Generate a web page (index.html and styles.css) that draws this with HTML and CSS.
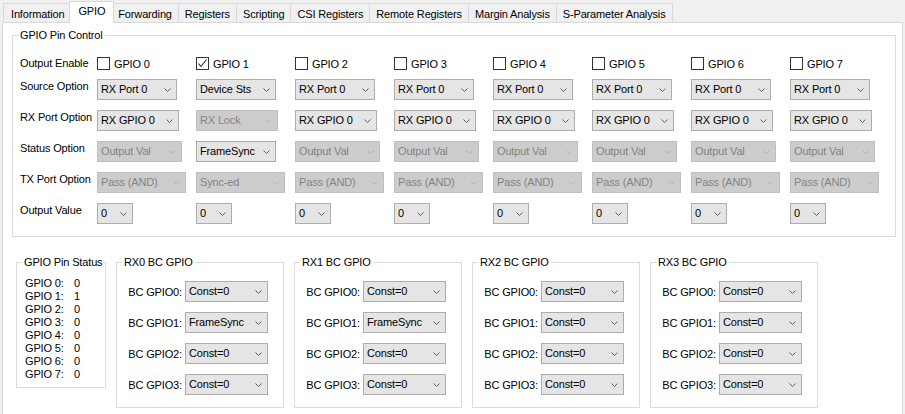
FILE: index.html
```html
<!DOCTYPE html>
<html>
<head>
<meta charset="utf-8">
<link rel="stylesheet" href="styles.css">
</head>
<body>
<div class="tabbar">
  <div class="tab">Information</div>
  <div class="tab active">GPIO</div>
  <div class="tab">Forwarding</div>
  <div class="tab">Registers</div>
  <div class="tab">Scripting</div>
  <div class="tab">CSI Registers</div>
  <div class="tab">Remote Registers</div>
  <div class="tab">Margin Analysis</div>
  <div class="tab">S-Parameter Analysis</div>
</div>
<div class="pane">
  <div class="group pin-control">
    <div class="group-title">GPIO Pin Control</div>
    <div class="pc-grid">
      <div class="lbl mid">Output Enable</div>
      <label class="cb"><span class="box"></span>GPIO 0</label>
      <label class="cb"><span class="box checked"><svg viewBox="0 0 11 11" width="11" height="11"><polyline points="1.5,5.5 4,8.5 9.5,1.5" fill="none" stroke="#222" stroke-width="1.1"/></svg></span>GPIO 1</label>
      <label class="cb"><span class="box"></span>GPIO 2</label>
      <label class="cb"><span class="box"></span>GPIO 3</label>
      <label class="cb"><span class="box"></span>GPIO 4</label>
      <label class="cb"><span class="box"></span>GPIO 5</label>
      <label class="cb"><span class="box"></span>GPIO 6</label>
      <label class="cb"><span class="box"></span>GPIO 7</label>

      <div class="lbl">Source Option</div>
      <div class="combo w-src"><span>RX Port 0</span><svg class="chev" viewBox="0 0 7 4"><polyline points="0.5,0.5 3.5,3.5 6.5,0.5"/></svg></div>
      <div class="combo w-src"><span>Device Sts</span><svg class="chev" viewBox="0 0 7 4"><polyline points="0.5,0.5 3.5,3.5 6.5,0.5"/></svg></div>
      <div class="combo w-src"><span>RX Port 0</span><svg class="chev" viewBox="0 0 7 4"><polyline points="0.5,0.5 3.5,3.5 6.5,0.5"/></svg></div>
      <div class="combo w-src"><span>RX Port 0</span><svg class="chev" viewBox="0 0 7 4"><polyline points="0.5,0.5 3.5,3.5 6.5,0.5"/></svg></div>
      <div class="combo w-src"><span>RX Port 0</span><svg class="chev" viewBox="0 0 7 4"><polyline points="0.5,0.5 3.5,3.5 6.5,0.5"/></svg></div>
      <div class="combo w-src"><span>RX Port 0</span><svg class="chev" viewBox="0 0 7 4"><polyline points="0.5,0.5 3.5,3.5 6.5,0.5"/></svg></div>
      <div class="combo w-src"><span>RX Port 0</span><svg class="chev" viewBox="0 0 7 4"><polyline points="0.5,0.5 3.5,3.5 6.5,0.5"/></svg></div>
      <div class="combo w-src"><span>RX Port 0</span><svg class="chev" viewBox="0 0 7 4"><polyline points="0.5,0.5 3.5,3.5 6.5,0.5"/></svg></div>

      <div class="lbl">RX Port Option</div>
      <div class="combo w-rxp"><span>RX GPIO 0</span><svg class="chev" viewBox="0 0 7 4"><polyline points="0.5,0.5 3.5,3.5 6.5,0.5"/></svg></div>
      <div class="combo w-rxp dis"><span>RX Lock</span><svg class="chev" viewBox="0 0 7 4"><polyline points="0.5,0.5 3.5,3.5 6.5,0.5"/></svg></div>
      <div class="combo w-rxp"><span>RX GPIO 0</span><svg class="chev" viewBox="0 0 7 4"><polyline points="0.5,0.5 3.5,3.5 6.5,0.5"/></svg></div>
      <div class="combo w-rxp"><span>RX GPIO 0</span><svg class="chev" viewBox="0 0 7 4"><polyline points="0.5,0.5 3.5,3.5 6.5,0.5"/></svg></div>
      <div class="combo w-rxp"><span>RX GPIO 0</span><svg class="chev" viewBox="0 0 7 4"><polyline points="0.5,0.5 3.5,3.5 6.5,0.5"/></svg></div>
      <div class="combo w-rxp"><span>RX GPIO 0</span><svg class="chev" viewBox="0 0 7 4"><polyline points="0.5,0.5 3.5,3.5 6.5,0.5"/></svg></div>
      <div class="combo w-rxp"><span>RX GPIO 0</span><svg class="chev" viewBox="0 0 7 4"><polyline points="0.5,0.5 3.5,3.5 6.5,0.5"/></svg></div>
      <div class="combo w-rxp"><span>RX GPIO 0</span><svg class="chev" viewBox="0 0 7 4"><polyline points="0.5,0.5 3.5,3.5 6.5,0.5"/></svg></div>

      <div class="lbl">Status Option</div>
      <div class="combo w-st dis"><span>Output Val</span><svg class="chev" viewBox="0 0 7 4"><polyline points="0.5,0.5 3.5,3.5 6.5,0.5"/></svg></div>
      <div class="combo w-fs"><span>FrameSync</span><svg class="chev" viewBox="0 0 7 4"><polyline points="0.5,0.5 3.5,3.5 6.5,0.5"/></svg></div>
      <div class="combo w-st dis"><span>Output Val</span><svg class="chev" viewBox="0 0 7 4"><polyline points="0.5,0.5 3.5,3.5 6.5,0.5"/></svg></div>
      <div class="combo w-st dis"><span>Output Val</span><svg class="chev" viewBox="0 0 7 4"><polyline points="0.5,0.5 3.5,3.5 6.5,0.5"/></svg></div>
      <div class="combo w-st dis"><span>Output Val</span><svg class="chev" viewBox="0 0 7 4"><polyline points="0.5,0.5 3.5,3.5 6.5,0.5"/></svg></div>
      <div class="combo w-st dis"><span>Output Val</span><svg class="chev" viewBox="0 0 7 4"><polyline points="0.5,0.5 3.5,3.5 6.5,0.5"/></svg></div>
      <div class="combo w-st dis"><span>Output Val</span><svg class="chev" viewBox="0 0 7 4"><polyline points="0.5,0.5 3.5,3.5 6.5,0.5"/></svg></div>
      <div class="combo w-st dis"><span>Output Val</span><svg class="chev" viewBox="0 0 7 4"><polyline points="0.5,0.5 3.5,3.5 6.5,0.5"/></svg></div>

      <div class="lbl">TX Port Option</div>
      <div class="combo w-tx dis"><span>Pass (AND)</span><svg class="chev" viewBox="0 0 7 4"><polyline points="0.5,0.5 3.5,3.5 6.5,0.5"/></svg></div>
      <div class="combo w-tx dis"><span>Sync-ed</span><svg class="chev" viewBox="0 0 7 4"><polyline points="0.5,0.5 3.5,3.5 6.5,0.5"/></svg></div>
      <div class="combo w-tx dis"><span>Pass (AND)</span><svg class="chev" viewBox="0 0 7 4"><polyline points="0.5,0.5 3.5,3.5 6.5,0.5"/></svg></div>
      <div class="combo w-tx dis"><span>Pass (AND)</span><svg class="chev" viewBox="0 0 7 4"><polyline points="0.5,0.5 3.5,3.5 6.5,0.5"/></svg></div>
      <div class="combo w-tx dis"><span>Pass (AND)</span><svg class="chev" viewBox="0 0 7 4"><polyline points="0.5,0.5 3.5,3.5 6.5,0.5"/></svg></div>
      <div class="combo w-tx dis"><span>Pass (AND)</span><svg class="chev" viewBox="0 0 7 4"><polyline points="0.5,0.5 3.5,3.5 6.5,0.5"/></svg></div>
      <div class="combo w-tx dis"><span>Pass (AND)</span><svg class="chev" viewBox="0 0 7 4"><polyline points="0.5,0.5 3.5,3.5 6.5,0.5"/></svg></div>
      <div class="combo w-tx dis"><span>Pass (AND)</span><svg class="chev" viewBox="0 0 7 4"><polyline points="0.5,0.5 3.5,3.5 6.5,0.5"/></svg></div>

      <div class="lbl">Output Value</div>
      <div class="combo w-val"><span>0</span><svg class="chev" viewBox="0 0 7 4"><polyline points="0.5,0.5 3.5,3.5 6.5,0.5"/></svg></div>
      <div class="combo w-val"><span>0</span><svg class="chev" viewBox="0 0 7 4"><polyline points="0.5,0.5 3.5,3.5 6.5,0.5"/></svg></div>
      <div class="combo w-val"><span>0</span><svg class="chev" viewBox="0 0 7 4"><polyline points="0.5,0.5 3.5,3.5 6.5,0.5"/></svg></div>
      <div class="combo w-val"><span>0</span><svg class="chev" viewBox="0 0 7 4"><polyline points="0.5,0.5 3.5,3.5 6.5,0.5"/></svg></div>
      <div class="combo w-val"><span>0</span><svg class="chev" viewBox="0 0 7 4"><polyline points="0.5,0.5 3.5,3.5 6.5,0.5"/></svg></div>
      <div class="combo w-val"><span>0</span><svg class="chev" viewBox="0 0 7 4"><polyline points="0.5,0.5 3.5,3.5 6.5,0.5"/></svg></div>
      <div class="combo w-val"><span>0</span><svg class="chev" viewBox="0 0 7 4"><polyline points="0.5,0.5 3.5,3.5 6.5,0.5"/></svg></div>
      <div class="combo w-val"><span>0</span><svg class="chev" viewBox="0 0 7 4"><polyline points="0.5,0.5 3.5,3.5 6.5,0.5"/></svg></div>
    </div>
  </div>

  <div class="bottom">
    <div class="group pin-status">
      <div class="group-title">GPIO Pin Status</div>
      <div class="ps-grid">
        <span>GPIO 0:</span><span>0</span>
        <span>GPIO 1:</span><span>1</span>
        <span>GPIO 2:</span><span>0</span>
        <span>GPIO 3:</span><span>0</span>
        <span>GPIO 4:</span><span>0</span>
        <span>GPIO 5:</span><span>0</span>
        <span>GPIO 6:</span><span>0</span>
        <span>GPIO 7:</span><span>0</span>
      </div>
    </div>

    <div class="group rx">
      <div class="group-title">RX0 BC GPIO</div>
      <div class="rx-grid">
        <span class="rl">BC GPIO0:</span><div class="combo w-bc"><span>Const=0</span><svg class="chev" viewBox="0 0 7 4"><polyline points="0.5,0.5 3.5,3.5 6.5,0.5"/></svg></div>
        <span class="rl">BC GPIO1:</span><div class="combo w-bc"><span>FrameSync</span><svg class="chev" viewBox="0 0 7 4"><polyline points="0.5,0.5 3.5,3.5 6.5,0.5"/></svg></div>
        <span class="rl">BC GPIO2:</span><div class="combo w-bc"><span>Const=0</span><svg class="chev" viewBox="0 0 7 4"><polyline points="0.5,0.5 3.5,3.5 6.5,0.5"/></svg></div>
        <span class="rl">BC GPIO3:</span><div class="combo w-bc"><span>Const=0</span><svg class="chev" viewBox="0 0 7 4"><polyline points="0.5,0.5 3.5,3.5 6.5,0.5"/></svg></div>
      </div>
    </div>

    <div class="group rx">
      <div class="group-title">RX1 BC GPIO</div>
      <div class="rx-grid">
        <span class="rl">BC GPIO0:</span><div class="combo w-bc"><span>Const=0</span><svg class="chev" viewBox="0 0 7 4"><polyline points="0.5,0.5 3.5,3.5 6.5,0.5"/></svg></div>
        <span class="rl">BC GPIO1:</span><div class="combo w-bc"><span>FrameSync</span><svg class="chev" viewBox="0 0 7 4"><polyline points="0.5,0.5 3.5,3.5 6.5,0.5"/></svg></div>
        <span class="rl">BC GPIO2:</span><div class="combo w-bc"><span>Const=0</span><svg class="chev" viewBox="0 0 7 4"><polyline points="0.5,0.5 3.5,3.5 6.5,0.5"/></svg></div>
        <span class="rl">BC GPIO3:</span><div class="combo w-bc"><span>Const=0</span><svg class="chev" viewBox="0 0 7 4"><polyline points="0.5,0.5 3.5,3.5 6.5,0.5"/></svg></div>
      </div>
    </div>

    <div class="group rx">
      <div class="group-title">RX2 BC GPIO</div>
      <div class="rx-grid">
        <span class="rl">BC GPIO0:</span><div class="combo w-bc"><span>Const=0</span><svg class="chev" viewBox="0 0 7 4"><polyline points="0.5,0.5 3.5,3.5 6.5,0.5"/></svg></div>
        <span class="rl">BC GPIO1:</span><div class="combo w-bc"><span>Const=0</span><svg class="chev" viewBox="0 0 7 4"><polyline points="0.5,0.5 3.5,3.5 6.5,0.5"/></svg></div>
        <span class="rl">BC GPIO2:</span><div class="combo w-bc"><span>Const=0</span><svg class="chev" viewBox="0 0 7 4"><polyline points="0.5,0.5 3.5,3.5 6.5,0.5"/></svg></div>
        <span class="rl">BC GPIO3:</span><div class="combo w-bc"><span>Const=0</span><svg class="chev" viewBox="0 0 7 4"><polyline points="0.5,0.5 3.5,3.5 6.5,0.5"/></svg></div>
      </div>
    </div>

    <div class="group rx">
      <div class="group-title">RX3 BC GPIO</div>
      <div class="rx-grid">
        <span class="rl">BC GPIO0:</span><div class="combo w-bc"><span>Const=0</span><svg class="chev" viewBox="0 0 7 4"><polyline points="0.5,0.5 3.5,3.5 6.5,0.5"/></svg></div>
        <span class="rl">BC GPIO1:</span><div class="combo w-bc"><span>Const=0</span><svg class="chev" viewBox="0 0 7 4"><polyline points="0.5,0.5 3.5,3.5 6.5,0.5"/></svg></div>
        <span class="rl">BC GPIO2:</span><div class="combo w-bc"><span>Const=0</span><svg class="chev" viewBox="0 0 7 4"><polyline points="0.5,0.5 3.5,3.5 6.5,0.5"/></svg></div>
        <span class="rl">BC GPIO3:</span><div class="combo w-bc"><span>Const=0</span><svg class="chev" viewBox="0 0 7 4"><polyline points="0.5,0.5 3.5,3.5 6.5,0.5"/></svg></div>
      </div>
    </div>
  </div>
</div>
</body>
</html>
```
FILE: styles.css
```css
html, body {
  margin: 0;
  padding: 0;
  height: 100%;
  overflow: hidden;
}
body {
  background: #f0f0f0;
  font-family: "Liberation Sans", Arial, sans-serif;
  font-size: 11px;
  letter-spacing: -0.15px;
  color: #000;
}

/* Tabs */
.tabbar {
  display: flex;
  align-items: flex-end;
  height: 22px;
  padding-left: 3px;
}
.tab {
  box-sizing: border-box;
  height: 19px;
  line-height: 18px;
  padding: 1px 6px 0;
  border: 1px solid #d9d9d9;
  border-bottom: 0;
  background: #f0f0f0;
  margin-left: -1px;
  white-space: nowrap;
}
.tab:first-child {
  margin-left: 0;
  padding: 1px 7px 0;
}
.tab.active {
  position: relative;
  z-index: 1;
  height: 22px;
  line-height: 19px;
  padding: 0 8px;
  margin: 0 -2px -1px -3px;
  background: #fff;
}

/* Pane */
.pane {
  box-sizing: border-box;
  margin: 0 2px 0 2px;
  height: calc(100% - 22px);
  border: 1px solid #d9d9d9;
  border-bottom: 0;
  background: #fff;
  padding: 12px 6px 0 9px;
}

/* Group boxes */
.group {
  box-sizing: border-box;
  border: 1px solid #dcdcdc;
  background: #fff;
}
.group-title {
  width: fit-content;
  margin: -8px 0 0 5px;
  padding: 0 2px;
  line-height: 15px;
  height: 15px;
  background: #fff;
  white-space: nowrap;
}

/* Pin control */
.pc-grid {
  display: grid;
  grid-template-columns: 77px repeat(8, 99px);
  grid-auto-rows: 31px;
  margin-top: 5px;
  padding: 0 0 2px 7px;
  align-items: start;
}
.lbl {
  line-height: 15px;
  white-space: nowrap;
}
.lbl.mid {
  align-self: center;
}
.cb {
  display: flex;
  align-items: center;
  align-self: center;
  gap: 4px;
  white-space: nowrap;
}
.box {
  box-sizing: border-box;
  width: 13px;
  height: 13px;
  border: 1px solid #333;
  background: #fff;
  display: flex;
  align-items: center;
  justify-content: center;
}
.box svg {
  display: block;
}

/* Combo boxes */
.combo {
  box-sizing: border-box;
  height: 21px;
  display: flex;
  align-items: center;
  justify-content: space-between;
  padding: 0 5px 0 3px;
  border: 1px solid #adadad;
  background: #e5e5e5;
  white-space: nowrap;
  line-height: 15px;
}
.combo.dis {
  background: #cccccc;
  border-color: #bfbfbf;
  color: #838383;
}
.chev {
  width: 7px;
  height: 4px;
  flex: none;
  overflow: visible;
}
.chev polyline {
  fill: none;
  stroke: #606060;
  stroke-width: 1;
}
.combo.dis .chev polyline {
  stroke: #b4b4b4;
}
.w-src { width: 80px; }
.w-rxp { width: 82px; }
.w-st { width: 85px; }
.w-fs { width: 80px; }
.w-tx { width: 89px; }
.w-val { width: 36px; }
.w-bc { width: 83px; height: 21px; }

/* Bottom section */
.bottom {
  display: flex;
  align-items: flex-start;
  gap: 10px;
  margin: 25px 0 0 4px;
}
.pin-status {
  width: 90px;
}
.ps-grid {
  display: grid;
  grid-template-columns: 49px auto;
  grid-auto-rows: 13px;
  line-height: 13px;
  padding: 7px 0 6px 8px;
}
.rx {
  width: 168px;
}
.rx-grid {
  display: grid;
  grid-template-columns: 55px 83px;
  grid-auto-rows: 21px;
  column-gap: 3px;
  row-gap: 10px;
  align-items: center;
  padding: 11px 0 12px 10px;
}
.rl {
  text-align: right;
  white-space: nowrap;
}
```
